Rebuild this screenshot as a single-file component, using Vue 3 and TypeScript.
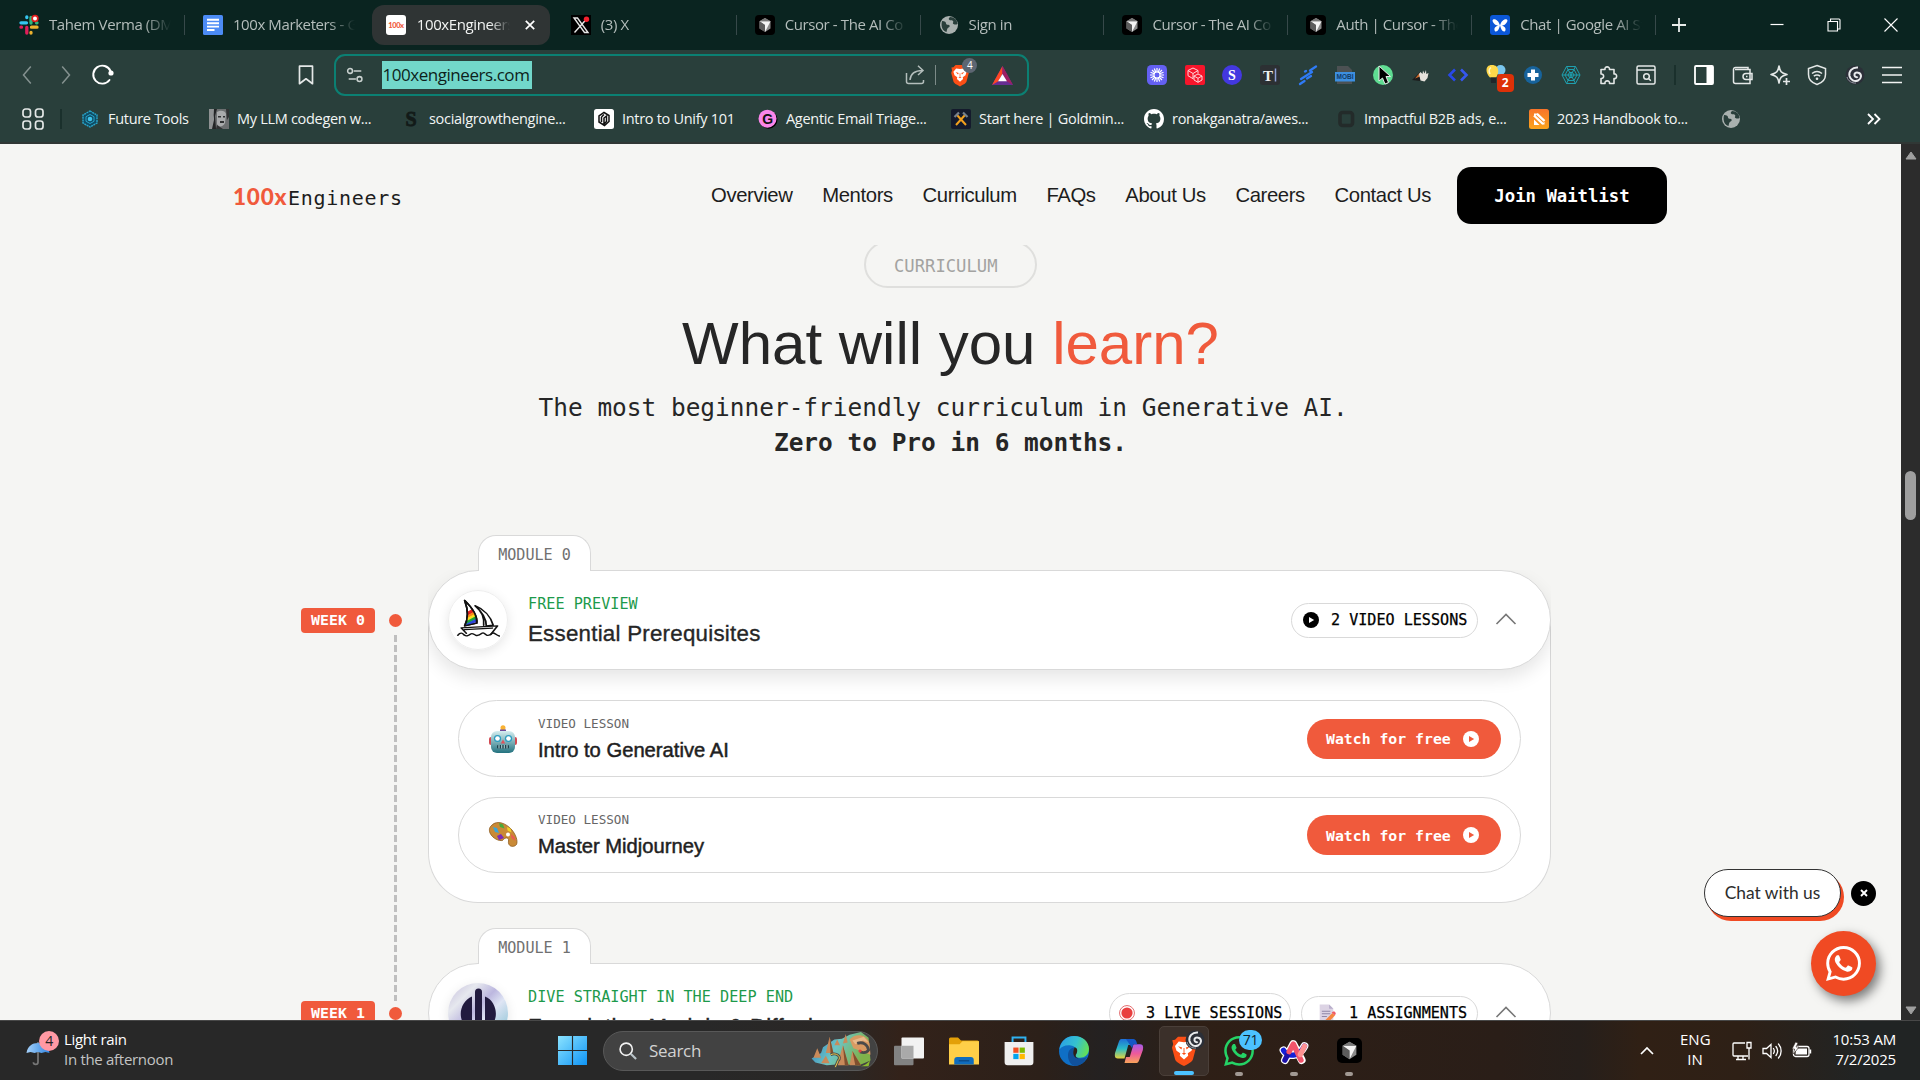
<script setup lang="ts">
interface Tab { icon: string; label: string; active?: boolean; line?: boolean }
interface Bookmark { icon: string; label: string; w: number }

const tabs: Tab[] = [
  { icon: 'slack', label: 'Tahem Verma (DM)', line: true },
  { icon: 'docs', label: '100x Marketers - G' },
  { icon: 'hundred', label: '100xEngineers', active: true },
  { icon: 'x', label: '(3) X', line: true },
  { icon: 'cursor', label: 'Cursor - The AI Co', line: true },
  { icon: 'globe', label: 'Sign in', line: true },
  { icon: 'cursor', label: 'Cursor - The AI Co', line: true },
  { icon: 'cursor', label: 'Auth | Cursor - The', line: true },
  { icon: 'butterfly', label: 'Chat | Google AI St', line: true },
]

const extensions = ['burst', 'boxes', 'sBadge', 'textTool', 'stripes', 'mobi', 'pointer', 'hand', 'code', 'bulb', 'plusBadge', 'web', 'puzzle', 'findPage']
const tools = ['sidebar', 'wallet', 'sparkle', 'shieldWifi', 'swirl', 'menu']

const bookmarks: Bookmark[] = [
  { icon: 'future', label: 'Future Tools', w: 129 },
  { icon: 'photo', label: 'My LLM codegen w...', w: 192 },
  { icon: 'gothS', label: 'socialgrowthengine...', w: 193 },
  { icon: 'unify', label: 'Intro to Unify 101', w: 164 },
  { icon: 'gBadge', label: 'Agentic Email Triage...', w: 193 },
  { icon: 'gold', label: 'Start here | Goldmin...', w: 193 },
  { icon: 'github', label: 'ronakganatra/awes...', w: 192 },
  { icon: 'square', label: 'Impactful B2B ads, e...', w: 193 },
  { icon: 'handbook', label: '2023 Handbook to...', w: 192 },
  { icon: 'globe', label: '', w: 143 },
]

const links = ['Overview', 'Mentors', 'Curriculum', 'FAQs', 'About Us', 'Careers', 'Contact Us']

const lessons = [
  { icon: 'robot', title: 'Intro to Generative AI' },
  { icon: 'palette', title: 'Master Midjourney' },
]

const apps = [
  { icon: 'taskview', size: 30, run: '' },
  { icon: 'folder', size: 30, run: '' },
  { icon: 'store', size: 30, run: '' },
  { icon: 'edge', size: 30, run: '' },
  { icon: 'copilot', size: 30, run: '' },
  { icon: 'brave', size: 30, run: 'on' },
  { icon: 'whatsGreen', size: 30, run: 'idle' },
  { icon: 'arc', size: 28, run: 'idle' },
  { icon: 'cursor', size: 25, run: 'idle' },
]

const globePath = '<circle cx="10" cy="10" r="9" fill="#a9b1af"/><path d="M3 6c3 .3 4 1 4 2.500s2 1 3 1.500 1 2-.5 2.500S8 15 7.500 17C4 16 1.500 12 3 6zM11 2c-1 1-2 2-.5 3s2.500-.5 3.500 1-1 2 .500 3 3 .5 4 0c-.2-4-3-7-7.500-7z" fill="#293f3b"/>'
const whatsPath = 'M17.472 14.382c-.297-.149-1.758-.867-2.03-.967-.273-.099-.471-.148-.67.15-.197.297-.767.966-.94 1.164-.173.199-.347.223-.644.075-.297-.15-1.255-.463-2.39-1.475-.883-.788-1.48-1.761-1.653-2.059-.173-.297-.018-.458.13-.606.134-.133.298-.347.446-.52.149-.174.198-.298.298-.497.099-.198.05-.371-.025-.52-.075-.149-.669-1.612-.916-2.207-.242-.579-.487-.5-.669-.51-.173-.008-.371-.01-.57-.01-.198 0-.52.074-.792.372-.272.297-1.04 1.016-1.04 2.479 0 1.462 1.065 2.875 1.213 3.074.149.198 2.096 3.2 5.077 4.487.709.306 1.262.489 1.694.625.712.227 1.36.195 1.871.118.571-.085 1.758-.719 2.006-1.413.248-.694.248-1.289.173-1.413-.074-.124-.272-.198-.57-.347m-5.421 7.403h-.004a9.87 9.87 0 01-5.031-1.378l-.361-.214-3.741.982.998-3.648-.235-.374a9.86 9.86 0 01-1.51-5.26c.001-5.45 4.436-9.884 9.888-9.884 2.64 0 5.122 1.03 6.988 2.898a9.825 9.825 0 012.893 6.994c-.003 5.45-4.437 9.884-9.885 9.884m8.413-18.297A11.815 11.815 0 0012.05 0C5.495 0 .16 5.335.157 11.892c0 2.096.547 4.142 1.588 5.945L.057 24l6.305-1.654a11.882 11.882 0 005.683 1.448h.005c6.554 0 11.89-5.335 11.893-11.893a11.821 11.821 0 00-3.48-8.413z'
const lion = '<path d="M4 2.500 6 .5h8l2 2 1.800 0.300-.6 2.700.8 2.300-2 7.500c-.5 1.800-1.800 2.500-6 4.700-4.200-2.200-5.500-2.900-6-4.700L2 7.800l.8-2.300-.6-2.700z" fill="#fb4f16"/><path d="M6.500 3.600 10 4.200l3.500-.6 2.500 3-1 3.200-2.500 1.700.3 1.700L10 15.600l-2.800-2.400.3-1.700L5 9.800 4 6.600z" fill="#fff"/><path d="m6 6.800 2.800.9-.6 1.300zM14 6.800l-2.800.9.6 1.300zM8.500 11.300h3L10 12.600zM9.700 8h.6v3.500h-.6z" fill="#fb4f16"/>'
const swirlArt = '<circle cx="10" cy="10" r="9.500" fill="#2b2f38"/><path d="M13 2.500C7 2 3.500 6.500 4.500 11c1 4 5 6 8.500 4.500s4-6 1-7.500-5 .5-4.500 2.500 2.500 2 3 1" fill="none" stroke="#e8eaec" stroke-width="2"/><path d="M2 12c1 4 5 6.500 9 6" fill="none" stroke="#9aa0a8" stroke-width="1"/>'
const cursorArt = '<rect width="20" height="20" rx="4" fill="#000"/><path d="m10 3 5.500 3.200v7.200L10 17l-5.500-3.600V6.200z" fill="#8b8b8b"/><path d="M4.500 6.200h11L10 17v-7z" fill="#f4f4f4"/><path d="M4.500 6.200 10 10v7l-5.500-3.600z" fill="#5c5c5c"/><path d="m10 3 5.500 3.200h-11z" fill="#777"/>'

const icons: Record<string, string> = {
  slack: '<g fill="none" stroke-width="3.300" stroke-linecap="round"><path d="M2 7.800h5.500M7.800 2v.6" stroke="#36c5f0"/><path d="M12 2.500V8M18 7.800h-.5" stroke="#2eb67d"/><path d="M12.500 12.200H18M12 17.500v.5" stroke="#ecb22e"/><path d="M7.800 12.500V18M2 12.200h.5" stroke="#e01e5a"/></g><circle cx="16" cy="3.500" r="3.700" fill="#e01e1e"/><circle cx="16" cy="3.500" r="2" fill="#fff"/>',
  docs: '<rect width="20" height="20" rx="1.500" fill="#4c8bf5"/><path d="M4 4.800h12M4 8.200h12M4 11.600h12M4 15h7.500" stroke="#fff" stroke-width="1.900"/>',
  hundred: '<rect width="20" height="20" rx="3" fill="#fff"/><text x="10" y="12.600" font-family="Lato" font-weight="900" font-size="7.500" fill="#f05a3c" text-anchor="middle">100x</text>',
  x: '<rect width="20" height="20" fill="#000"/><path d="M3 3h3.500l10.500 14.500h-3.500zM16.500 3 3.500 17.500" fill="none" stroke="#e6e6e6" stroke-width="1.400"/><circle cx="15.500" cy="4.300" r="2.700" fill="#f4212e"/>',
  cursor: cursorArt,
  globe: globePath,
  butterfly: '<rect width="20" height="20" rx="3" fill="#0b57d8"/><path d="M10 10.500C9 6 5.500 3.500 3.500 4.300S3 8 5 9.500c1 .8 2.500 1 3.500 1-2 .5-4.500 2-4 4.500s3 1.500 4-.5c.5-1 1-2.500 1.500-4 .5 1.500 1 3 1.500 4 1 2 3.500 3 4 .5s-2-4-4-4.500c1 0 2.500-.2 3.500-1 2-1.500 3.500-4.400 1.500-5.200S11 6 10 10.500z" fill="#fff"/>',
  back: '<path d="M12.800 1.500 5.500 10l7.300 8.500" fill="none" stroke="#84918f" stroke-width="1.500"/>',
  forward: '<path d="M7.200 1.500 14.500 10l-7.300 8.500" fill="none" stroke="#84918f" stroke-width="1.500"/>',
  reload: '<path d="M16.500 15A9 9 0 1 1 17.500 6" fill="none" stroke="#fff" stroke-width="1.900" stroke-linecap="round"/><circle cx="18" cy="8" r="2.600" fill="#fff"/>',
  bookmark: '<path d="M3.500 1.200h13v17.500L10 13.800l-6.500 4.900z" fill="none" stroke="#e4e8e7" stroke-width="1.700" stroke-linejoin="round"/>',
  tune: '<g fill="none" stroke="#c9d1cf" stroke-width="1.700"><circle cx="4.500" cy="5.500" r="2.700"/><path d="M8.500 5.500H17M3 14.500h8"/><circle cx="15" cy="14.500" r="2.700"/></g>',
  share: '<g fill="none" stroke="#b4bebc" stroke-width="1.500"><path d="M1.500 8v8.500a2 2 0 0 0 2 2h13a2 2 0 0 0 2-2V15"/><path d="M5 15c.5-6 4-9.500 12.500-9.500M13 .8l5 4.700-5 4.500"/></g>',
  brave: lion,
  bat: '<path d="M10 1 0 19h20z" fill="#662d91"/><path d="M10 1 0 19l6-3.500L10 8z" fill="#ff4724"/><path d="m10 1 10 18-6-3.500L10 8z" fill="#9e1f63"/><path d="m10 8.500 4.200 7H5.800z" fill="#fff"/>',
  burst: '<rect width="20" height="20" rx="4.500" fill="#6460f2"/><path d="M10 3v4M10 13v4M3 10h4M13 10h4M5 5l2.900 2.900M12.100 12.100 15 15M15 5l-2.900 2.900M7.900 12.100 5 15M7.300 3.500l1.500 3.700M11.200 12.800l1.500 3.700M12.700 3.500l-1.500 3.700M8.800 12.800l-1.500 3.700M3.500 7.300l3.700 1.500M12.800 11.200l3.700 1.500M3.500 12.700l3.700-1.500M12.800 8.800l3.700-1.500" stroke="#fff" stroke-width="1.200"/><circle cx="10" cy="10" r="3" fill="none" stroke="#fff" stroke-width="1"/>',
  boxes: '<rect width="20" height="20" rx="2" fill="#f7152b"/><g fill="none" stroke="#ffd5da" stroke-width="1"><path d="m8 3 5 2.500-5 3-5-3zM3 5.500v5.200l5 3V8.500M13 5.500v3"/><path d="m13 9 4 2-4 2.300L9 11zM9 11v4l4 2.300 4-2.300v-4M13 13.300v4"/></g>',
  sBadge: '<circle cx="10" cy="10" r="10" fill="#4338e0"/><text x="10" y="15" font-family="Liberation Serif" font-weight="700" font-size="14" fill="#fff" text-anchor="middle">S</text>',
  textTool: '<rect width="20" height="20" rx="3" fill="#2c3033"/><text x="8" y="15.500" font-family="Liberation Serif" font-weight="700" font-size="15" fill="#eee" text-anchor="middle">T</text><path d="M15.500 3.500v13" stroke="#8ea0d8" stroke-width="1.500"/>',
  stripes: '<g stroke="#2f7bf6" stroke-width="2.300" stroke-linecap="round"><path d="M12 5.500 18 1.500M7 6.500l1-.6M3 14l11-7M9 13.500l4-2.500M2 19l4.500-3"/></g>',
  mobi: '<path d="M2 1h11l4 4v14H2z" fill="#4c5153"/><rect y="7" width="20" height="9.500" fill="#3d8fe0"/><text x="10" y="14.300" font-family="Liberation Sans" font-weight="700" font-size="6.500" fill="#123a66" text-anchor="middle">MOBI</text>',
  pointer: '<circle cx="10" cy="10" r="10" fill="#5fdc92"/><path d="M6 1v15l3.500-3 2.500 6 3.500-1.500-2.500-6h4.500z" fill="#000" stroke="#e9e9e9" stroke-width="1"/>',
  hand: '<path d="m2 15 8-8 2 6-2 3z" fill="#1c1c1c"/><path d="M5 13.500 9.500 8l2 3z" fill="#c96b2c"/><path d="m9 9 1.500-2 2 2 .5-3.500 1.500 3 1.500-3.500.3 4L18.500 8l-1 5-3 3.500-4-1z" fill="#e6e2dc"/>',
  code: '<path d="M7 4.500 1.500 10 7 15.500" fill="none" stroke="#2848e8" stroke-width="2.600"/><path d="M13 4.500 18.500 10 13 15.500" fill="none" stroke="#3657f0" stroke-width="2.600"/>',
  bulb: '<circle cx="14.500" cy="5" r="5" fill="#7ac6ee"/><path d="M6 0c8 0 7 9 4 12.500H4C0 9-2 0 6 0z" fill="#ffd84a"/><path d="M5 2.500C3 4 3 7 4 9" stroke="#fff6c8" stroke-width="1.500" fill="none"/><path d="M4.500 12.500H10V18H5z" fill="#20262a"/>',
  plusBadge: '<circle cx="10" cy="10" r="9" fill="#17639c"/><path d="M8 4.500h4V8h3.500v4H12v3.500H8V12H4.500V8H8z" fill="#fff"/>',
  web: '<g fill="none" stroke="#1f9fae" stroke-width="1"><path d="M5.500 1.500h9L19 10l-4.500 8.500h-9L1 10zM7 4.500h6l3 5.500-3 5.500H7L4 10zM8.500 7.500h3L13 10l-1.500 2.500h-3L7 10zM5.500 1.500l9 17M14.500 1.500l-9 17M1 10h18"/></g>',
  puzzle: '<path d="M3 4.500h4c-.8-3.500 5-3.500 4.500 0h4.500V9c3.500-.8 3.500 5.500 0 4.500v5h-4.500c.8-3.500-5.300-3.500-4.500 0H3v-5c3.500.5 3.500-5 0-4.500z" fill="none" stroke="#e4e8e7" stroke-width="1.600" stroke-linejoin="round"/>',
  findPage: '<g fill="none" stroke="#e4e8e7" stroke-width="1.500"><rect x="1" y="1" width="18" height="18" rx="1.500"/><path d="M1 5h18M12.800 13.800l2 2"/><circle cx="10.500" cy="11.500" r="2.800"/></g>',
  sidebar: '<rect x="1" y="1" width="18" height="18" rx="1" fill="none" stroke="#fff" stroke-width="1.800"/><path d="M12.500 1H19v18h-6.500z" fill="#fff"/>',
  wallet: '<g fill="none" stroke="#e4e8e7" stroke-width="1.500"><path d="M16 4.500V2.500H3.500a2 2 0 0 0-2 2v12a2 2 0 0 0 2 2H18V4.500H3"/><path d="M20 8.500h-6a3 3 0 0 0 0 6h6zM14 11.500h1.500"/></g>',
  sparkle: '<path d="M9 1c1 5.500 2 7 8 8.500-6 1.500-7 3-8 8.500-1-5.500-2-7-8-8.500C7 8 8 6.500 9 1z" fill="none" stroke="#e4e8e7" stroke-width="1.600" stroke-linejoin="round"/><path d="M16.500 13v7M13 16.500h7" stroke="#e4e8e7" stroke-width="1.700"/>',
  shieldWifi: '<path d="M10 .5 18.500 3.500v6c0 4.800-3.200 8.300-8.500 10-5.300-1.700-8.500-5.200-8.500-10v-6z" fill="none" stroke="#e4e8e7" stroke-width="1.500"/><path d="M5 8.500c3-2.500 7-2.500 10 0M6.800 11.200c2-1.500 4.400-1.500 6.400 0" fill="none" stroke="#e4e8e7" stroke-width="1.500"/><circle cx="10" cy="13.800" r="1.300" fill="#e4e8e7"/>',
  swirl: swirlArt,
  menu: '<path d="M0 2.500h20M0 10h20M0 17.500h20" stroke="#f1f3f2" stroke-width="1.700"/>',
  grid: '<g fill="none" stroke="#e4e8e7" stroke-width="1.700"><rect x="0" y="0" width="7.500" height="8" rx="2.500"/><rect x="12.500" y="0" width="7.500" height="8" rx="2.500"/><rect x="0" y="12" width="7.500" height="8" rx="2.500"/><rect x="12.500" y="12" width="7.500" height="8" rx="2.500"/></g>',
  future: '<path d="m10 2 7 4v8l-7 4-7-4V6z" fill="#0f4c63" stroke="#28a5cc" stroke-width="1.400" stroke-dasharray="2 .6"/><path d="m10 5.500 4 2.200v4.600l-4 2.200-4-2.200V7.700z" fill="none" stroke="#28a5cc" stroke-width="1"/><circle cx="10" cy="10" r="2.300" fill="#3fc3ea"/>',
  photo: '<rect width="20" height="20" fill="#6c6f70"/><path d="M0 0h5l-1 6 2 6-2 8H0z" fill="#8f9293"/><path d="M5 0h3l-2 7 1 13H3l2-9z" fill="#232526"/><path d="M8 3c3-2 8-2 9 2l-1 9c-2 4-6 5-8 1z" fill="#a9abac"/><path d="M9 7h3v1.500H9zM14 7h2v1.500h-2zM11 12h4v2h-4zM17 0h3v8l-2 3zM8 16l6 4H7z" fill="#303233"/>',
  gothS: '<text x="10" y="17" font-family="Liberation Serif" font-weight="700" font-size="20" fill="#121a18" stroke="#121a18" stroke-width=".8" text-anchor="middle">S</text>',
  unify: '<rect width="20" height="20" rx="2.500" fill="#fff"/><path d="m10 3.500 5 3v6l-4.500 4L5 13V7zM7.500 8v5M10 5.500 7.500 8M12.500 7v5.500L10 15V9z" fill="none" stroke="#111" stroke-width="1.500"/>',
  gBadge: '<circle cx="10.500" cy="10.700" r="9" fill="#000"/><circle cx="9.500" cy="9.700" r="9" fill="#fb86ea"/><text x="9.500" y="14.800" font-family="Liberation Sans" font-weight="700" font-size="14" fill="#111" text-anchor="middle">G</text>',
  gold: '<rect width="20" height="20" rx="2" fill="#141a2c"/><path d="m5 16 9-10M15 16 6 6" stroke="#f2a01d" stroke-width="2"/><path d="m3.500 8 4.500-4.500M16.500 8 12 3.500" stroke="#77818c" stroke-width="2.200"/>',
  github: '<path transform="scale(1.25)" fill="#fff" d="M8 0C3.580 0 0 3.580 0 8c0 3.540 2.290 6.530 5.470 7.590.4.07.55-.17.55-.38 0-.19-.01-.82-.01-1.490-2.010.37-2.530-.49-2.690-.94-.09-.23-.48-.94-.82-1.130-.28-.15-.68-.52-.01-.53.63-.01 1.080.58 1.230.82.72 1.210 1.870.87 2.330.66.07-.52.28-.87.51-1.070-1.780-.2-3.640-.89-3.640-3.950 0-.87.31-1.590.82-2.150-.08-.2-.36-1.020.08-2.120 0 0 .67-.21 2.200.82.64-.18 1.320-.27 2-.27s1.360.09 2 .27c1.530-1.040 2.200-.82 2.200-.82.44 1.100.16 1.920.08 2.120.51.56.82 1.270.82 2.150 0 3.070-1.870 3.750-3.650 3.950.29.25.54.73.54 1.480 0 1.070-.01 1.930-.01 2.200 0 .21.15.46.55.38A8.010 8.010 0 0 0 16 8c0-4.420-3.580-8-8-8"/>',
  square: '<rect x="4" y="3.500" width="12.500" height="13" rx="2.500" fill="none" stroke="#232b2a" stroke-width="3.600"/>',
  handbook: '<defs><linearGradient id="hb" x1="0" y1="0" x2="0" y2="1"><stop offset="0" stop-color="#f8742a"/><stop offset="1" stop-color="#fba41c"/></linearGradient></defs><rect width="20" height="20" rx="2.500" fill="url(#hb)"/><path d="m5 6.500 9 8.500M8 4.800l7.500 7.200" stroke="#fff" stroke-width="2.400"/><path d="M5 4.500h4L5 8zM15.500 15.500H13l2.500-3zM5 10.500l5.500 5.500H5z" fill="#fff"/>',
  more: '<path d="m4 5 5 5-5 5M10.500 5l5 5-5 5" fill="none" stroke="#fff" stroke-width="1.800"/>',
  boat: '<g stroke="#111" stroke-width="1" stroke-linejoin="round" stroke-linecap="round"><clipPath id="sail"><path d="M6 1c4 5 7.500 11 7 17L6 20C8.500 14 8 8 6 1z"/></clipPath><path d="M6 1c4 5 7.500 11 7 17L6 20C8.500 14 8 8 6 1z" fill="#fff"/><g clip-path="url(#sail)" stroke="none"><path d="m4 12 10-7v3L4 15z" fill="#e02020"/><path d="m4 14.500 11-7.500v2.500L4 17z" fill="#fa8a1a"/><path d="m4 16.500 11-7.500v2.500L4 19z" fill="#f8e01d"/><path d="m4 18.500 11-7.500v2.500L4 21z" fill="#18a33c"/><path d="m4 20.500 11-7.500v2.500L4 23z" fill="#2a48dd"/><path d="m6 21.500 9-6v5H6z" fill="#7a1fb0"/></g><path d="M6 1c4 5 7.500 11 7 17L6 20C8.500 14 8 8 6 1z" fill="none"/><path d="M12 5c5 2.500 9 8 10.500 14.500l-4 .5c0-5-2-10-6.500-15zM12 5c3 3 5.500 8 5 14.500" fill="none"/><path d="m4 21.500 21-1.500-4 6.500M4 21.500l3 4M6 22.800l16-1.200" fill="none"/><path d="M2 27c2-3 3-1 4 0s2.500 0 3.500-1 2 .5 3 1 2.500-.5 3.500-1.500 2 1 3 1.500 2-.5 3-1.500 2 1.500 4 2" fill="none"/></g>',
  robot: '<defs><linearGradient id="rb" x1="0" y1="0" x2="0" y2="1"><stop offset="0" stop-color="#d5eef0"/><stop offset="1" stop-color="#23727f"/></linearGradient></defs><rect x="0" y="12" width="28" height="8" rx="2" fill="#d24b53"/><circle cx="14" cy="2.800" r="2.500" fill="#f9b233"/><rect x="11" y="4.500" width="6" height="4" fill="#6f4a9a"/><rect x="2" y="6" width="24" height="22" rx="6" fill="url(#rb)"/><circle cx="8.500" cy="13.500" r="3.600" fill="#2c9cc0"/><circle cx="19.500" cy="13.500" r="3.600" fill="#2c9cc0"/><circle cx="8.500" cy="13.500" r="2.300" fill="#fff"/><circle cx="19.500" cy="13.500" r="2.300" fill="#fff"/><path d="m14 14.500 2.200 4h-4.400z" fill="#e0515a"/><rect x="8" y="20" width="12" height="3.500" rx="1" fill="#1e3f4a"/><path d="M10 20v3.500M12.700 20v3.500M15.300 20v3.500M18 20v3.500" stroke="#9ec9ce" stroke-width="1.200"/>',
  palette: '<path d="M3 4C8-1 17 2 23 9c4 5 6 11 4.500 14.500-2 2.500-6 2.500-7.500 0s.5-4.500-1-6-4 0-5.500 2C10 20 4 18 1 12 0 9 0 6.500 3 4z" fill="#c98a37" stroke="#8d5a1e" stroke-width=".8"/><circle cx="19" cy="13.500" r="2" fill="#fff"/><path d="m4 6 4 1 2 5-4-1z" fill="#3aa7d8"/><path d="m10 2 4 1.500 1.500 4-4.500-1.500z" fill="#48ab3a"/><path d="m18 6 3.500 1.500 1 4-4-2z" fill="#f2d229"/><path d="m22 13 3.500 3 1 4-4-3z" fill="#ea5a52"/><path d="m8 15 4-2 3 4-5 2z" fill="#7b2bb8"/>',
  disc: '<defs><linearGradient id="dc" x1="0" y1="0" x2="1" y2="1"><stop offset="0" stop-color="#c4bcdc"/><stop offset=".25" stop-color="#e6e8ee"/><stop offset=".45" stop-color="#bcb7df"/><stop offset=".6" stop-color="#dfe5f4"/><stop offset=".8" stop-color="#a9cfe0"/><stop offset="1" stop-color="#d8cbe6"/></linearGradient></defs><circle cx="30" cy="30" r="30" fill="url(#dc)"/><path d="M24 13.500V46C8 42 10 19 24 13.500zM37 13.500V46c15-4 14-27 0-32.500z" fill="#221b3f"/><rect x="27" y="5.500" width="7" height="48" rx="3.500" fill="#221b3f"/>',
  record: '<circle cx="10" cy="10" r="9.300" fill="none" stroke="#e2676b" stroke-width="1.200"/><circle cx="10" cy="10" r="7" fill="#e93f3f"/>',
  memo: '<path d="M2 0h11l5 5v15H2z" fill="#dcd3e4"/><path d="M13 0v5h5z" fill="#b9aecb"/><path d="M4.500 8h10M4.500 11h10M4.500 14h6" stroke="#8f86a6" stroke-width="1.200"/><path d="M7 20 17 10l3 3-8 8z" fill="#f5853f"/><path d="m16 9 3-1 2 2-1 3z" fill="#ef5a67"/>',
  whats: '<path transform="scale(.8333)" fill="#fff" d="' + whatsPath + '"/>',
  whatsGreen: '<path transform="scale(.8333)" fill="#25d366" d="' + whatsPath + '"/>',
  umbrella: '<defs><linearGradient id="um" x1="0" x2="1" y1="0" y2="0"><stop offset="0" stop-color="#a6d2fb"/><stop offset="1" stop-color="#2e84e0"/></linearGradient></defs><path d="M10 0v17.500c0 2.500-4 2.500-4 0" fill="none" stroke="#777" stroke-width="1.500"/><path d="M0 9.500C1 3.500 5 .8 10 .8s9 2.700 10 8.700l-3.500-.8-3.500.8-3-.8-3 .8-3.500-.8z" fill="url(#um)"/>',
  start: '<defs><linearGradient id="st" x1="0" y1="0" x2="1" y2="1"><stop offset="0" stop-color="#8be3ff"/><stop offset="1" stop-color="#0f94f5"/></linearGradient></defs><path d="M0 0h9.600v9.600H0zM10.400 0H20v9.600h-9.600zM0 10.400h9.600V20H0zM10.400 10.400H20V20h-9.600z" fill="url(#st)"/>',
  search: '<circle cx="8" cy="8" r="6.800" fill="none" stroke="#f2f2f2" stroke-width="1.800"/><path d="m13 13 6 6" stroke="#b9c3c8" stroke-width="2.300"/>',
  taskview: '<rect x="0" y="6.500" width="13" height="13" rx=".6" fill="#828282"/><rect x="5" y="1" width="15" height="14" rx=".6" fill="#f2f2f2"/><path d="M5 6.500h8V15H5z" fill="#a9a9a9"/>',
  folder: '<path d="M0 2a1 1 0 0 1 1-1h5l2 2h11a1 1 0 0 1 1 1v5H0z" fill="#e3a008"/><path d="M0 5.500h7L9 3.500h11V19H0z" fill="#ffcf48"/><path d="M3.500 19v-3a2 2 0 0 1 2-2h9a2 2 0 0 1 2 2v3z" fill="#0f6cbd"/><path d="M6.500 16.500h7" stroke="#0b4d8c" stroke-width="1"/>',
  store: '<path d="M5.700 5V1h8.600v4" fill="none" stroke="#2fb1f0" stroke-width="1.300"/><path d="M.4 4h19.200v13.500a2 2 0 0 1-2 2H2.400a2 2 0 0 1-2-2z" fill="#efefef"/><path d="M6.200 7.700h3.500v3.500H6.200z" fill="#f25022"/><path d="M10.400 7.700h3.500v3.500h-3.500z" fill="#7fba00"/><path d="M6.200 11.900h3.500v3.500H6.200z" fill="#00a4ef"/><path d="M10.400 11.900h3.500v3.500h-3.500z" fill="#ffb900"/>',
  edge: '<defs><linearGradient id="ea" x1="0" x2="1" y1=".2" y2=".5"><stop offset="0" stop-color="#2a9fe6"/><stop offset=".55" stop-color="#35c1d0"/><stop offset="1" stop-color="#62e05a"/></linearGradient></defs><circle cx="10" cy="10" r="10" fill="#0f6fc6"/><path d="M.3 9C1 3.500 5 0 10 0c6 0 10 4 10 8.500 0 4-3 6-6 6-2.500 0-3.500-1-2.500-2.500S12 7 8 6.300C4.500 5.800 1.500 7 .3 9z" fill="url(#ea)"/><path d="M6 13c0-3 1.500-5 4.500-5.500C8.500 11 10 15 14.500 15c2 0 3.500-.7 4.200-1.200C17 18 13.500 20 10.500 20 8 19.500 6 16.500 6 13z" fill="#10519c"/><path d="M10.500 7.500c2 .5 2 3 1 4.500s0 3 2.500 3c-3.500.5-6-3-3.500-7.500z" fill="#2e1f16"/>',
  copilot: '<defs><linearGradient id="ca" x1="0" y1="0" x2="0" y2="1"><stop offset="0" stop-color="#1e6fd8"/><stop offset=".5" stop-color="#2bbbc6"/><stop offset="1" stop-color="#e6d23c"/></linearGradient><linearGradient id="cb" x1="0" y1="0" x2="0" y2="1"><stop offset="0" stop-color="#a55bea"/><stop offset=".5" stop-color="#ee5a9a"/><stop offset="1" stop-color="#f9a45a"/></linearGradient></defs><path d="M5 2h8l-1 4H9.500L7 15H2.500C.5 15 .3 13 .8 11L3 4.500C3.500 3 4 2 5 2z" fill="url(#ca)"/><path d="M15 18H7l1-4h2.500L13 5.500h4.500c2 0 2.200 2 1.700 4L17 15.500c-.5 1.500-1 2.500-2 2.500z" fill="url(#cb)"/><path d="M8 2h5c1.500 0 2 1.500 2.500 3.500H13L12 8z" fill="#1457c4"/>',
  arc: '<g fill="none" stroke-linecap="round" stroke-linejoin="round"><path d="m3.500 16.500 6-11.500 6 11.500M2.500 9.500c3 5 11 5 15-3" stroke="#fff" stroke-width="5.600"/><path d="M2.500 9.500c3 5 11 5 15-3" stroke="#1420d8" stroke-width="3.800"/><path d="m3.500 16.500 2.500-5" stroke="#1b10a8" stroke-width="3.800"/><path d="M6.500 10.500 9.500 5l5.500 11.500" stroke="#f2536a" stroke-width="3.800"/><path d="m14.500 12.500 3-6" stroke="#ff9292" stroke-width="3.800"/></g>',
  scene: '<defs><linearGradient id="sc" x1="0" y1="0" x2="1" y2=".3"><stop offset="0" stop-color="#2d7fc4"/><stop offset=".5" stop-color="#6cc4c4"/><stop offset="1" stop-color="#7fb24a"/></linearGradient></defs><path d="M0 28 10 22l2-6 12-8 8-1 8-4 12-3 8 6 2 24-12 5-20-1-14 1-12-3z" fill="url(#sc)"/><path d="M40 8c6-7 18-6 21 4l1 12-10-4-8-3z" fill="#d89a62"/><path d="m43 9 12-4 5 6-6-2-8 4z" fill="#e8b98a"/><path d="m15 22 4-17 4 17zM2 27l4-10 4 10zM24 14l3-6 3 6zM33 12l3-10 2 9zM27 35l6-21 6 21zM10 33l5-8 4 8zM40 35l3-15 9 15z" fill="#c98a5a"/><path d="m19 5 4 17h-3zM33 14l6 21h-4zM43 20l9 15h-6z" fill="#80502e"/><path d="M20 24c6-3 12 2 8 6l-3 7M48 12c6-2 11 1 12 7-2 3-6 3-9 2" fill="none" stroke="#4a4a4a" stroke-width="3"/><path d="M20 24c6-3 12 2 8 6l-3 7" fill="none" stroke="#f2d24a" stroke-width="1"/><circle cx="51" cy="20" r="1.700" fill="#e24242"/><path d="M52 36c5-1 9-4 10-8l-2 8z" fill="#8dbb2e"/>',
  monitor: '<g fill="none" stroke="#fff" stroke-width="1.300"><path d="M13 2H2a1 1 0 0 0-1 1v11a1 1 0 0 0 1 1h14M6 15v3.500M11 15v3.500M4 18.500h10"/><path d="M15 1.500h4V7h-4zM17 7v11.500"/></g>',
  sound: '<g fill="none" stroke="#fff" stroke-width="1.300" stroke-linecap="round"><path d="M1 7.500h3.500L9 3.500v13l-4.500-4H1zM11.500 7.500c1 1.500 1 3.500 0 5M14 5.500c2 2.700 2 6.300 0 9M16.500 3c3.500 4 3.500 10 0 14"/></g>',
  battery: '<rect x="1.500" y="5.500" width="15.500" height="10" rx="2" fill="none" stroke="#fff" stroke-width="1.300"/><path d="M4 7.500h11v6H3.500zM17.500 8.500h1.700v4h-1.700z" fill="#fff"/><path d="M3.500 1 0 8h2.500L1.500 13 7 6H4l2-4z" fill="#fff" stroke="#2b2019" stroke-width=".6"/>',
}
</script>

<template>
  <div class="screen">
    <div class="tabbar">
      <div v-for="(t, i) in tabs" :key="i" class="tab" :class="{ active: t.active, line: t.line }">
        <svg class="i20" viewBox="0 0 20 20" v-html="icons[t.icon]" />
        <span class="tab-label">{{ t.label }}</span>
        <svg v-if="t.active" class="tab-x" viewBox="0 0 10 10"><path d="m.8.8 8.400 8.400M9.200.8.8 9.200" stroke="#fff" stroke-width="1.700" /></svg>
      </div>
      <svg class="new-tab" viewBox="0 0 14 14"><path d="M7 0v14M0 7h14" stroke="#e8ecea" stroke-width="1.800" /></svg>
      <div class="win">
        <svg viewBox="0 0 14 14"><path d="M.5 6.500h13" stroke="#fff" stroke-width="1.200" /></svg>
        <svg viewBox="0 0 14 14"><path d="M1 3.500h9.500V13H1zM3.500 3V1h8.500a1 1 0 0 1 1 1v9h-2" fill="none" stroke="#fff" stroke-width="1.100" /></svg>
        <svg viewBox="0 0 14 14"><path d="m.5.5 13 13M13.500.5l-13 13" stroke="#fff" stroke-width="1.100" /></svg>
      </div>
    </div>

    <div class="toolbar">
      <span v-for="n in ['back', 'forward', 'reload']" :key="n" class="slot"><svg class="i20" viewBox="0 0 20 20" v-html="icons[n]" /></span>
      <span class="slot mark"><svg class="i20" viewBox="0 0 20 20" v-html="icons.bookmark" /></span>
      <div class="omnibox">
        <svg class="tune" viewBox="0 0 20 20" v-html="icons.tune" />
        <span class="url">100xengineers.com</span>
        <svg class="i20 share" viewBox="0 0 20 20" v-html="icons.share" />
        <span class="omni-line"></span>
        <span class="shield"><svg viewBox="0 0 20 20" v-html="icons.brave" /><b>4</b></span>
        <svg class="bat" viewBox="0 0 20 20" v-html="icons.bat" />
      </div>
      <div class="exts">
        <span v-for="n in extensions" :key="n" class="slot"><svg class="i20" viewBox="0 0 20 20" v-html="icons[n]" /><b v-if="n === 'bulb'" class="two">2</b></span>
        <span class="split"></span>
        <span v-for="n in tools" :key="n" class="slot"><svg class="i20" viewBox="0 0 20 20" v-html="icons[n]" /></span>
      </div>
    </div>

    <div class="bookmarks">
      <svg class="i20" viewBox="0 0 20 20" v-html="icons.grid" />
      <span class="split"></span>
      <div v-for="b in bookmarks" :key="b.label" class="bm" :style="{ width: b.w + 'px' }">
        <svg class="i20" viewBox="0 0 20 20" v-html="icons[b.icon]" /><span>{{ b.label }}</span>
      </div>
      <svg class="i20" viewBox="0 0 20 20" v-html="icons.more" />
    </div>

    <div class="view">
      <div class="page">
        <header class="site">
          <div class="logo"><b>100x</b><span>Engineers</span></div>
          <nav><a v-for="l in links" :key="l">{{ l }}</a></nav>
          <button class="join">Join Waitlist</button>
        </header>
        <main>
          <div class="pill-row"><span class="pill">CURRICULUM</span></div>
          <h1>What will you <em>learn?</em></h1>
          <p class="lead">The most beginner-friendly curriculum in Generative AI.&nbsp;<br /><b>Zero to Pro in 6 months.</b></p>

          <section class="module">
            <div class="week"><span class="week-tag">WEEK 0</span><i class="dot"></i></div>
            <div class="rail"></div>
            <div class="card">
              <div class="card-tab">MODULE 0</div>
              <div class="card-head raised">
                <span class="avatar boat"><svg viewBox="1 0 26 29" preserveAspectRatio="none" v-html="icons.boat" /></span>
                <div class="names"><small>FREE PREVIEW</small><strong>Essential Prerequisites</strong></div>
                <span class="chip">
                  <svg viewBox="0 0 16 16"><circle cx="8" cy="8" r="8" /><path d="m6 5 5.200 3L6 11z" fill="#fff" /></svg>2 VIDEO LESSONS
                </span>
                <svg class="chev" viewBox="0 0 20 12"><path d="m.5 11 9.500-9.500 9.500 9.500" /></svg>
              </div>
              <div class="card-body">
                <div v-for="l in lessons" :key="l.title" class="lesson">
                  <svg class="emoji" viewBox="0 0 28 28" v-html="icons[l.icon]" />
                  <div class="lesson-names"><small>VIDEO LESSON</small><strong>{{ l.title }}</strong></div>
                  <button class="watch">Watch for free<svg viewBox="0 0 16 16"><circle cx="8" cy="8" r="8" fill="#fff" /><path d="m6 5 5.200 3L6 11z" fill="#f05a3c" /></svg></button>
                </div>
              </div>
            </div>
          </section>

          <section class="module">
            <div class="week"><span class="week-tag">WEEK 1</span><i class="dot"></i></div>
            <div class="card">
              <div class="card-tab">MODULE 1</div>
              <div class="card-head">
                <span class="avatar"><svg viewBox="0 0 60 60" v-html="icons.disc" /></span>
                <div class="names"><small>DIVE STRAIGHT IN THE DEEP END</small><strong>Foundation Models &amp; Diffusion</strong></div>
                <span class="chip live"><svg viewBox="0 0 20 20" v-html="icons.record" />3 LIVE SESSIONS</span>
                <span class="chip task"><svg viewBox="0 0 20 20" v-html="icons.memo" />1 ASSIGNMENTS</span>
                <svg class="chev" viewBox="0 0 20 12"><path d="m.5 11 9.500-9.500 9.500 9.500" /></svg>
              </div>
            </div>
          </section>
        </main>
        <div class="chat">
          <div class="chat-row"><span class="bubble">Chat with us</span><span class="chat-x"><svg viewBox="0 0 8 8"><path d="m1 1 6 6M7 1 1 7" stroke="#fff" stroke-width="1.900" /></svg></span></div>
          <span class="wa"><svg viewBox="0 0 20 20" v-html="icons.whats" /></span>
        </div>
      </div>
      <div class="scroll">
        <svg viewBox="0 0 12 9"><path d="M6 1 11 8H1z" fill="#9f9f9f" stroke="#9f9f9f" stroke-linejoin="round" /></svg>
        <span class="thumb"></span>
        <svg viewBox="0 0 12 9"><path d="M6 8 1 1h10z" fill="#9f9f9f" stroke="#9f9f9f" stroke-linejoin="round" /></svg>
      </div>
    </div>

    <footer class="taskbar">
      <div class="weather">
        <svg viewBox="0 0 20 20" v-html="icons.umbrella" /><b>4</b>
        <div><p>Light rain</p><p class="dim">In the afternoon</p></div>
      </div>
      <svg class="start" viewBox="0 0 20 20" v-html="icons.start" />
      <div class="search"><svg class="mag" viewBox="0 0 20 20" v-html="icons.search" /><span>Search</span><svg class="scene" viewBox="0 0 63 40" v-html="icons.scene" /></div>
      <div class="apps">
        <span v-for="(a, i) in apps" :key="i" class="app" :class="a.run">
          <svg :width="a.size" :height="a.size" viewBox="0 0 20 20" v-html="icons[a.icon]" />
          <svg v-if="a.icon === 'brave'" class="badge-swirl" viewBox="0 0 20 20" v-html="icons.swirl" />
          <b v-if="a.icon === 'whatsGreen'">71</b>
        </span>
      </div>
      <div class="tray">
        <svg class="up" viewBox="0 0 14 8"><path d="m1 7 6-6 6 6" fill="none" stroke="#fff" stroke-width="1.700" /></svg>
        <div class="lang">ENG<br />IN</div>
        <svg class="tr" viewBox="0 0 20 20" v-html="icons.monitor" />
        <svg class="tr" viewBox="0 0 20 20" v-html="icons.sound" />
        <svg class="tr" viewBox="0 0 20 20" v-html="icons.battery" />
        <div class="clock">10:53 AM<br />7/2/2025</div>
      </div>
    </footer>
  </div>
</template>

<style>
body { margin: 0; overflow: hidden; }
</style>

<style scoped>
* { box-sizing: border-box; }
svg { display: block; flex: none; overflow: visible; }
p, h1 { margin: 0; }
.screen { width: 1920px; height: 1080px; display: flex; flex-direction: column; overflow: hidden; font-family: "Open Sans", "Noto Sans", sans-serif; }
.i20 { width: 20px; height: 20px; }

.tabbar { height: 50px; flex: none; background: #0a2420; display: flex; align-items: center; padding-left: 1px; }
.tab { width: 183.900px; height: 40px; flex: none; display: flex; align-items: center; padding-left: 18px; position: relative; color: #b4bdbb; font-size: 15px; letter-spacing: -0.4px; }
.tab-label { margin: -2px 0 0 10px; width: 122px; white-space: nowrap; overflow: hidden; -webkit-mask-image: linear-gradient(90deg, #000 78%, transparent); mask-image: linear-gradient(90deg, #000 78%, transparent); }
.tab.line::after { content: ""; position: absolute; right: 0; top: 10px; width: 1px; height: 20px; background: #37494a; }
.tab.active { width: 178px; margin: 0 3px; background: #2f3434; border-radius: 12px; padding-left: 14px; color: #f2f4f3; }
.active .tab-label { width: 93px; margin-left: 11px; }
.tab-x { width: 10px; height: 10px; margin-left: 15px; }
.new-tab { width: 14px; height: 14px; margin-left: 16px; }
.win { margin-left: auto; display: flex; gap: 43px; padding-right: 22px; }
.win svg { width: 14px; height: 14px; }

.toolbar { height: 46px; padding-top: 4px; flex: none; background: #293f3b; display: flex; align-items: center; padding-left: 9px; }
.slot { width: 37.600px; height: 42px; flex: none; display: flex; align-items: center; justify-content: center; position: relative; }
.mark { margin-left: 165.500px; }
.omnibox { width: 695px; height: 42px; flex: none; margin-left: 9.500px; border: 2px solid #0b8073; border-radius: 11px; display: flex; align-items: center; padding-left: 10px; }
.tune { width: 18px; height: 18px; }
.url { margin-left: 18px; width: 150px; height: 28px; line-height: 27px; background: #72d7ca; color: #0d1f1c; font-size: 17px; letter-spacing: -0.450px; white-space: nowrap; }
.share { margin-left: 373px; }
.omni-line { width: 1px; height: 20px; background: #7c8b88; margin-left: 10px; }
.shield { position: relative; margin-left: 13px; }
.shield svg { width: 22px; height: 23px; }
.shield b { position: absolute; left: 13px; top: -6px; width: 15px; height: 15px; border-radius: 8px; background: #5d6672; color: #fff; font: 10px/15px "Open Sans", sans-serif; text-align: center; }
.bat { width: 23px; height: 21px; margin-left: 20px; }
.exts { display: flex; align-items: center; margin-left: 109px; }
.two { position: absolute; left: 20px; top: 20px; width: 17px; height: 18px; border-radius: 4px; background: #dd3108; color: #fff; font: 700 12px/18px "Open Sans", sans-serif; text-align: center; }
.split { width: 2px; height: 20px; flex: none; background: #1a302c; margin: 0 9.500px; }

.bookmarks { height: 48px; flex: none; background: #293f3b; border-bottom: 2px solid #303735; display: flex; align-items: center; padding-left: 23px; }
.bookmarks .split { margin: 0 18px 0 17px; }
.bm { flex: none; display: flex; align-items: center; gap: 8px; color: #f2f5f4; font-size: 14.500px; letter-spacing: -0.300px; white-space: nowrap; }
.bm span { margin-top: -1px; }

.view { flex: none; height: 876px; display: flex; background: #f5f5f3; overflow: hidden; }
.page { width: 1901px; position: relative; overflow: hidden; }
.scroll { width: 19px; background: #2c2c2c; display: flex; flex-direction: column; align-items: center; padding: 7px 0 5px; }
.scroll svg { width: 12px; height: 9px; }
.thumb { width: 11px; height: 49px; border-radius: 6px; background: #9f9f9f; margin: 311px 0 auto; }

.site { height: 101px; background: #f5f5f3; display: flex; align-items: center; padding: 2px 0 0 233px; position: relative; z-index: 2; }
.logo { width: 478px; padding-top: 2px; display: flex; align-items: baseline; }
.logo b { width: 55px; font: 900 22.500px Lato, sans-serif; color: #f05a3c; letter-spacing: 0.800px; }
.logo span { font: 20px "DejaVu Sans Mono", monospace; color: #1d1d1d; letter-spacing: 0.700px; }
nav { display: flex; gap: 29.700px; font: 20.300px "Liberation Sans", Arial, sans-serif; letter-spacing: -0.380px; color: #1d1d1d; width: 746px; white-space: nowrap; }
.join { width: 210px; height: 57px; border: 0; border-radius: 14px; background: #000; color: #fff; font: 700 17.300px "DejaVu Sans Mono", monospace; padding: 0; }

.pill-row { margin-top: -4px; display: flex; justify-content: center; }
.pill { width: 173px; height: 47px; border: 2px solid #dfdfdd; border-radius: 24px; padding-left: 28px; font: 17.200px/46px "DejaVu Sans Mono", monospace; color: #a3a3a1; }
h1 { text-align: center; font: 400 60px/68px "Liberation Sans", Arial, sans-serif; color: #262626; margin-top: 22px; }
h1 em { font-style: normal; color: #f05a3c; }
.lead { text-align: center; font: 24.450px/35px "DejaVu Sans Mono", monospace; color: #262626; margin-top: 12px; }

.module { position: relative; padding-left: 428px; height: 393px; }
.lead + .module { margin-top: 75px; }
.week { position: absolute; left: 301px; top: 73px; display: flex; align-items: center; gap: 14px; }
.week-tag { width: 74px; height: 25px; border-radius: 4px; background: #f05a3c; color: #fff; font: 700 14.900px/25px "DejaVu Sans Mono", monospace; text-align: center; }
.dot { width: 13px; height: 13px; border-radius: 50%; background: #f05a3c; }
.rail { position: absolute; left: 394px; top: 100px; width: 3px; height: 366px; background: repeating-linear-gradient(#bfbfbf 0 7px, transparent 7px 10px); }
.card { width: 1123px; }
.card-tab { width: 113px; height: 36px; margin: 0 0 -1px 50px; position: relative; z-index: 2; border: 1px solid #d9d9d9; border-bottom: 0; border-radius: 18px 18px 0 0; background: #fff; color: #707070; font: 15.100px/39px "DejaVu Sans Mono", monospace; text-align: center; }
.card-head { height: 100px; border: 1px solid #d9d9d9; border-radius: 50px; background: #fff; display: flex; align-items: center; padding: 0 34px 0 19px; position: relative; z-index: 1; }
.raised { box-shadow: 0 8px 18px rgba(0, 0, 0, 0.1); clip-path: inset(0 0 -40px 0); }
.avatar { width: 60px; height: 60px; flex: none; border-radius: 50%; box-shadow: 0 3px 12px rgba(0, 0, 0, 0.1); display: flex; align-items: center; justify-content: center; }
.avatar.boat { border: 1px solid #eee; }
.avatar svg { width: 60px; height: 60px; }
.avatar.boat svg { width: 45px; height: 39px; margin-top: -3px; }
.names { margin: 4px auto 0 20px; display: flex; flex-direction: column; white-space: nowrap; }
.names small { font: 15.200px/24px "DejaVu Sans Mono", monospace; color: #1d9a4b; }
.names strong { font: 400 22.300px/36px "Liberation Sans", Arial, sans-serif; color: #262626; letter-spacing: 0.250px; -webkit-text-stroke: 0.350px #262626; }
.chip { height: 35px; width: 187px; flex: none; border: 1px solid #d9d9d9; border-radius: 18px; display: flex; align-items: center; gap: 12px; padding-left: 11px; font: 15.100px "DejaVu Sans Mono", monospace; color: #000; -webkit-text-stroke: 0.250px #000; white-space: nowrap; }
.chip svg { width: 16px; height: 16px; }
.live { width: 182px; height: 41px; border-radius: 21px; padding-left: 9px; gap: 11px; margin-right: 10px; }
.task { width: 177px; padding-left: 16px; gap: 14px; }
.chip.task svg { width: 17px; height: 20px; }
.chev { width: 20px; height: 12px; margin: -2px 0 0 18px; }
.chev path { fill: none; stroke: #777; stroke-width: 1.600; }
.card-body { height: 283px; margin-top: -50px; border: 1px solid #d9d9d9; border-top: 0; border-radius: 0 0 50px 50px; background: #fff; padding: 80px 29px 0; display: flex; flex-direction: column; gap: 20px; }
.lesson { height: 77px; border: 1px solid #d9d9d9; border-radius: 39px; display: flex; align-items: center; padding: 0 19px 0 30px; }
.lesson + .lesson { height: 76px; }
.emoji { width: 28px; height: 28px; }
.lesson-names { margin-left: 21px; margin-right: auto; display: flex; flex-direction: column; white-space: nowrap; }
.lesson-names small { font: 12.600px/22px "DejaVu Sans Mono", monospace; color: #666; }
.lesson-names strong { font: 400 20.200px/30px "Liberation Sans", Arial, sans-serif; color: #1f1f1f; letter-spacing: 0; -webkit-text-stroke: 0.500px #1f1f1f; }
.watch { width: 194px; height: 40px; border: 0; border-radius: 20px; background: #f05a3c; color: #fff; display: flex; align-items: center; gap: 12px; padding: 0 0 0 19px; font: 700 14.800px "DejaVu Sans Mono", monospace; white-space: nowrap; }
.watch svg { width: 16px; height: 16px; }

.chat { position: absolute; right: 25px; top: 725px; z-index: 3; display: flex; flex-direction: column; align-items: flex-end; gap: 14px; }
.chat-row { display: flex; align-items: center; gap: 10px; }
.bubble { width: 137px; height: 48px; border: 1px solid #333; border-radius: 24px; background: #fff; box-shadow: 3px 4px 0 #f04a23; text-align: center; font: 17.400px/46px Lato, sans-serif; color: #2d2d2d; }
.chat-x { width: 25px; height: 25px; border-radius: 50%; background: #000; display: flex; align-items: center; justify-content: center; }
.chat-x svg { width: 8px; height: 8px; }
.wa { width: 65px; height: 65px; border-radius: 50%; background: #f04a23; box-shadow: 4px 5px 11px rgba(0, 0, 0, 0.5); display: flex; align-items: center; justify-content: center; }
.wa svg { width: 35px; height: 35px; }

.taskbar { height: 60px; flex: none; border-top: 1px solid #484848; background: linear-gradient(90deg, #282828 0 700px, #2a2725 840px, #33221a 900px, #2c2019 1040px, #242121 1100px, #2e1f16 1200px, #2a1e18 1500px, #261f1b 1580px, #302015 1640px, #2e2016 1740px, #212424 1860px); display: flex; align-items: center; position: relative; color: #fff; font-size: 15px; letter-spacing: -0.300px; }
.weather { position: relative; display: flex; align-items: center; padding-left: 26px; width: 558px; line-height: 20px; }
.weather svg { width: 24px; height: 23px; margin-top: 6px; }
.weather b { position: absolute; left: 39px; top: -2px; width: 20px; height: 20px; border-radius: 50%; background: #ff99a4; color: #222; font: 14px/20px "Open Sans", sans-serif; text-align: center; }
.weather div { margin: -4px 0 0 14px; }
.dim { color: #c3c3c3; }
.start { width: 29px; height: 29px; }
.search { width: 275px; height: 40px; margin-left: 16px; border-radius: 20px; border: 1px solid #585858; background: #424242; display: flex; align-items: center; padding-left: 15px; font-size: 17px; color: #d2d2d2; }
.mag { width: 18px; height: 18px; margin-right: 12px; }
.scene { width: 63px; height: 38px; margin-left: auto; margin-right: 4px; }
.apps { display: flex; gap: 5px; margin-left: 6px; }
.app { width: 50px; height: 50px; position: relative; display: flex; align-items: center; justify-content: center; border-radius: 5px; }
.app.on { background: #3b302a; border: 1px solid #4a3f39; }
.app.on::after, .app.idle::after { content: ""; position: absolute; bottom: 0; width: 8px; height: 4px; border-radius: 2px; background: #a19993; }
.app.on::after { width: 20px; background: #4cc2ff; }
.badge-swirl { position: absolute; width: 20px; height: 20px; right: 3px; top: 3px; }
.app b { position: absolute; left: 25px; top: 4px; width: 23px; height: 20px; border-radius: 10px; background: #4cc2ff; color: #10222c; font: 14px/20px "Open Sans", sans-serif; text-align: center; }
.tray { margin-left: auto; display: flex; align-items: center; padding-right: 24px; line-height: 20px; }
.up { width: 14px; height: 8px; margin-right: 26px; }
.lang { width: 30px; text-align: center; margin: -3px 22px 0 0; letter-spacing: 0; }
.tr { width: 20px; height: 20px; margin-right: 10px; }
.clock { width: 74px; margin-top: -4px; text-align: right; white-space: nowrap; letter-spacing: -0.200px; }
</style>
